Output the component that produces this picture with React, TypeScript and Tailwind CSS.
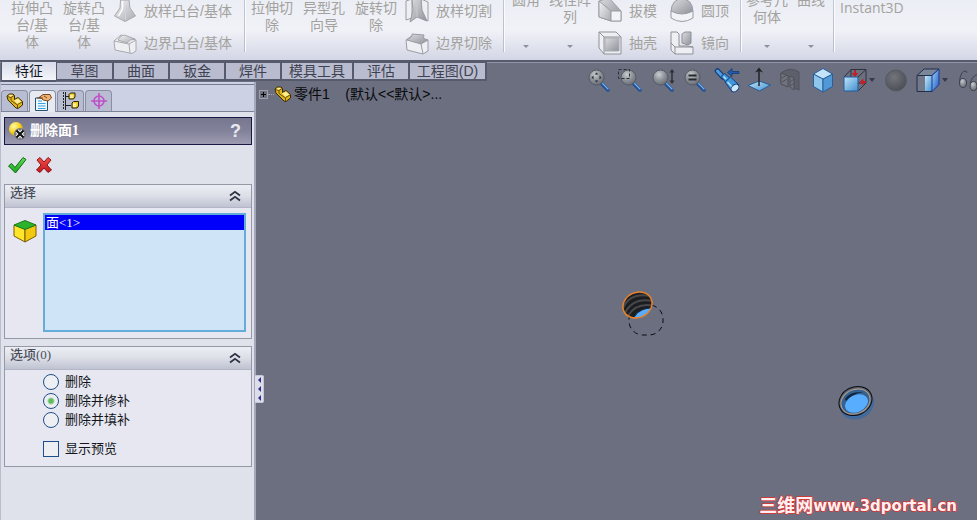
import { useState, type ReactNode } from "react";

/* ---------- ribbon drawings ---------- */

const ribbonSvg = "h-6 w-6 shrink-0";

function Defs() {
  return (
    <svg className="absolute h-0 w-0" aria-hidden="true">
      <defs>
        <linearGradient id="grey" x1="0" y1="0" x2="1" y2="1">
          <stop offset="0" stopColor="#f4f4f6" />
          <stop offset="1" stopColor="#a9abb2" />
        </linearGradient>
        <linearGradient id="greyDark" x1="0" y1="0" x2="1" y2="1">
          <stop offset="0" stopColor="#dcdde1" />
          <stop offset="1" stopColor="#8f9199" />
        </linearGradient>
        <radialGradient id="lens" cx="0.4" cy="0.3" r="0.75">
          <stop offset="0" stopColor="#c8cdd0" />
          <stop offset="0.5" stopColor="#8f949a" />
          <stop offset="1" stopColor="#666b74" />
        </radialGradient>
        <linearGradient id="blue" x1="0" y1="0" x2="1" y2="1">
          <stop offset="0" stopColor="#c3e5f8" />
          <stop offset="1" stopColor="#3f8fd0" />
        </linearGradient>
        <linearGradient id="deepBlue" x1="0" y1="0" x2="1" y2="1">
          <stop offset="0" stopColor="#9fd4f5" />
          <stop offset="1" stopColor="#1f55c4" />
        </linearGradient>
        <radialGradient id="ball" cx="0.4" cy="0.35" r="0.7">
          <stop offset="0" stopColor="#73757c" />
          <stop offset="1" stopColor="#4b4d55" />
        </radialGradient>
        <radialGradient id="sphere" cx="0.35" cy="0.3" r="0.8">
          <stop offset="0" stopColor="#fff9a8" />
          <stop offset="0.5" stopColor="#f6d62a" />
          <stop offset="1" stopColor="#b98c0a" />
        </radialGradient>
        <linearGradient id="green" x1="0" y1="0" x2="0" y2="1">
          <stop offset="0" stopColor="#5fe04f" />
          <stop offset="1" stopColor="#17a51a" />
        </linearGradient>
        <linearGradient id="red" x1="0" y1="0" x2="0" y2="1">
          <stop offset="0" stopColor="#f0504a" />
          <stop offset="1" stopColor="#c01820" />
        </linearGradient>
      </defs>
    </svg>
  );
}

function LoftIcon() {
  return (
    <svg className={ribbonSvg} viewBox="0 0 24 24" stroke="#a8aab0" fill="url(#grey)">
      <path d="M7.500 1 L7 9 L1.500 17 L12 22.500 L22.500 17 L17 9 L16 1 Z" />
      <path d="M9.500 2 L9.500 10 L5.500 17" fill="none" stroke="#fff" strokeWidth="1.500" />
      <path d="M12.500 10 L12.500 21" fill="none" stroke="#d2d3d8" />
    </svg>
  );
}
function BoundaryIcon() {
  return (
    <svg className={ribbonSvg} viewBox="0 0 24 24" stroke="#a8aab0" fill="#eeeff3">
      <path d="M1 10 L8 4 L23 9 L23 20 L19 22.500 L2 19 Z" />
      <path d="M1 10 L16 13 L23 9 M16 13 L17 22" fill="none" />
      <path d="M5 9 Q9 2 14 5 L22 8 Q17 8 14 12 Z" fill="url(#grey)" />
    </svg>
  );
}
function LoftCutIcon() {
  return (
    <svg className={ribbonSvg} viewBox="0 0 24 24" stroke="#9b9da5" fill="#eeeff3">
      <path d="M1 2 L7 0 L7 19 L1 21 Z M16 0 L23 3 L23 22 L17 20 Z" />
      <path d="M7 0 L16 0 L17 11 L22 22 L12 18 L5 23 L8 11 Z" fill="url(#greyDark)" />
      <path d="M12 0 L12 18" fill="none" stroke="#c9cad0" />
    </svg>
  );
}
function BoundaryCutIcon() {
  return (
    <svg className={ribbonSvg} viewBox="0 0 24 24" stroke="#9b9da5" fill="#eeeff3">
      <path d="M1 9 L8 4 L23 9 L23 20 L18 23 L2 19 Z" />
      <path d="M2 9 Q8 6 7 3 L19 4 Q17 9 23 9 L16 13 Z" fill="url(#greyDark)" />
      <path d="M16 13 L18 23" fill="none" />
    </svg>
  );
}
function DraftIcon() {
  return (
    <svg className={ribbonSvg} viewBox="0 0 24 24" stroke="#9b9da5" fill="url(#grey)">
      <path d="M1 2 L11 -1 L23 12 L23 22 L13 22 L1 18 Z" fill="url(#greyDark)" />
      <path d="M1 2 L13 12 L13 22 L1 18 Z" />
      <path d="M13 12 L23 12 L23 22 L13 22 Z" fill="#f2f3f6" />
    </svg>
  );
}
function ShellIcon() {
  return (
    <svg className={ribbonSvg} viewBox="0 0 24 24" stroke="#8f9199" fill="#eeeff3">
      <path d="M1 1 L18 1 L23 6 L23 23 L6 23 L1 17 Z" />
      <path d="M6 6 L23 6 M1 1 L6 6 L6 23" fill="none" />
      <path d="M7 7 L21 7 L21 20 L7 20 Z" fill="url(#greyDark)" stroke="#a9abb2" />
    </svg>
  );
}
function DomeIcon() {
  return (
    <svg className={ribbonSvg} viewBox="0 0 24 24" stroke="#9b9da5" fill="url(#grey)">
      <path d="M1 12 L1 19 Q12 26 23 19 L23 12 Z" fill="#f2f3f6" />
      <path d="M1 12 Q2 0 12 0 Q22 0 23 12 Q12 18 1 12 Z" fill="url(#greyDark)" />
    </svg>
  );
}
function MirrorIcon() {
  return (
    <svg className={ribbonSvg} viewBox="0 0 24 24" stroke="#8f9199" fill="#eeeff3">
      <path d="M1 1 L7 1 L9 3 L9 15 L17 15 L23 16 L23 23 L5 23 L1 19 Z" />
      <path d="M12 3 L15 1 L21 1 L21 12 L18 14 L12 12 Z" fill="url(#greyDark)" />
      <path d="M5 16 L23 16 M5 16 L5 23 M5 16 L1 12" fill="none" />
    </svg>
  );
}

/* ---------- ribbon ---------- */

function Caret() {
  return <span className="h-0 w-0 border-x-[3px] border-t-[3px] border-x-transparent border-t-[#8f919b]" />;
}

function BigButton({ lines, narrow }: { lines: string[]; narrow?: boolean }) {
  if (narrow) {
    return (
      <button disabled className="-mt-2 flex h-14 w-11 flex-col items-center justify-between whitespace-nowrap leading-[17px]">
        <span className="flex flex-col items-center">
          {lines.map((l) => (
            <span key={l}>{l}</span>
          ))}
        </span>
        <Caret />
      </button>
    );
  }
  return (
    <button disabled className="flex w-13 flex-col items-center self-start whitespace-nowrap leading-[17px]">
      {lines.map((l) => (
        <span key={l}>{l}</span>
      ))}
    </button>
  );
}

function SmallColumn({ items, className }: { items: [ReactNode, string][]; className: string }) {
  return (
    <div className={`-mt-px flex flex-col gap-2 ${className}`}>
      {items.map(([icon, label]) => (
        <button key={label} disabled className="flex h-6 items-center gap-[7px] whitespace-nowrap">
          {icon}
          {label}
        </button>
      ))}
    </div>
  );
}

function Separator() {
  return <div className="-mt-1 h-14 w-px shrink-0 bg-gradient-to-b from-[#c4c7d3] to-[#b9bccb] shadow-[1px_0_0_#fafbfd]" />;
}

function Ribbon() {
  return (
    <header className="flex h-[60px] shrink-0 overflow-hidden bg-gradient-to-b from-[#eceef5] via-[#f1f2f8] to-[#d3d6e5] text-sm text-[#a3a29e]">
      <div className="flex shrink-0 pl-1.5">
        <BigButton lines={["拉伸凸", "台/基", "体"]} />
        <BigButton lines={["旋转凸", "台/基", "体"]} />
        <SmallColumn className="w-[134px] pl-[3px]" items={[[<LoftIcon />, "放样凸台/基体"], [<BoundaryIcon />, "边界凸台/基体"]]} />
      </div>
      <Separator />
      <div className="flex shrink-0 pl-px">
        <BigButton lines={["拉伸切", "除"]} />
        <BigButton lines={["异型孔", "向导"]} />
        <BigButton lines={["旋转切", "除"]} />
        <SmallColumn className="w-[101px] pl-[3px]" items={[[<LoftCutIcon />, "放样切割"], [<BoundaryCutIcon />, "边界切除"]]} />
      </div>
      <Separator />
      <div className="flex shrink-0">
        <BigButton narrow lines={["圆角"]} />
        <BigButton narrow lines={["线性阵", "列"]} />
        <SmallColumn className="w-[78px] pl-1.5" items={[[<DraftIcon />, "拔模"], [<ShellIcon />, "抽壳"]]} />
        <SmallColumn className="w-[70px]" items={[[<DomeIcon />, "圆顶"], [<MirrorIcon />, "镜向"]]} />
      </div>
      <Separator />
      <div className="flex shrink-0 pl-1">
        <BigButton narrow lines={["参考几", "何体"]} />
        <BigButton narrow lines={["曲线"]} />
      </div>
      <Separator />
      <button disabled className="self-start px-1.5 font-['Open_Sans','Noto_Sans_CJK_SC',sans-serif] leading-4">
        Instant3D
      </button>
    </header>
  );
}

/* ---------- command tabs ---------- */

const commandTabs: [string, string][] = [
  ["草图", "w-[57px]"],
  ["曲面", "w-14"],
  ["钣金", "w-14"],
  ["焊件", "w-14"],
  ["模具工具", "w-[72px]"],
  ["评估", "w-14"],
  ["工程图(D)", "w-[77px]"],
];

function CommandTabs() {
  return (
    <nav className="flex h-5 pl-px text-sm leading-4 text-[#3e4250]">
      <button className="h-5 w-14 rounded-b-[2px] border-x border-b-2 border-[#555a6c] bg-gradient-to-b from-[#d9dcea] to-[#f4f5fa] text-[#15171f]">
        特征
      </button>
      {commandTabs.map(([label, width]) => (
        <button
          key={label}
          className={`h-[19px] whitespace-nowrap border-b-2 border-r-2 border-t border-[#555a6c] bg-[#b9bccf] ${width}`}
        >
          {label}
        </button>
      ))}
    </nav>
  );
}

/* ---------- property manager ---------- */

function PartIcon() {
  return (
    <svg className="h-4.5 w-4.5" viewBox="0 0 18 18" strokeLinejoin="round">
      <path
        d="M1 4 L3.500 2 L7 2 L8.500 3.500 L8.500 7.500 L12 5.500 L16.500 9.500 L16.500 13 L12 16.500 L10 16 L2 8 Z"
        fill="#e3b51c"
        stroke="#3a2d06"
      />
      <path d="M2 4.200 L4.500 2.800 L7 3 L5 5 Z" fill="#fff2a0" />
      <path d="M8 8.500 L12 6.500 L15.500 9.800 L11.500 12 Z" fill="#ffee90" />
      <path d="M1.500 4.500 L5 5.500 L5 8.500 L11.500 13 L11.500 16 M11.500 12.500 L16 10 M5 5.500 L8 3.500" fill="none" stroke="#5b4705" strokeWidth="0.900" />
    </svg>
  );
}
function PropertyIcon() {
  return (
    <svg className="h-4.5 w-4.5" viewBox="0 0 18 18">
      <path d="M1.500 5 H13.500 V17.500 H1.500 Z" fill="#eef8ff" stroke="#28506e" />
      <path d="M4 8 H8 M4 10.500 H11.500 M4 13 H11.500 M4 15.500 H11.500" stroke="#35a1e0" />
      <path d="M5 4.500 L9 1.500 H16 L17.500 5 L14 8 L9 7 L7 5 Z" fill="#f0b070" stroke="#6b3c14" strokeWidth="0.900" />
      <path d="M3 5 H9 M10 3 L13 5" stroke="#6b3c14" strokeWidth="0.900" />
    </svg>
  );
}
function ConfigIcon() {
  return (
    <svg className="h-4.5 w-4.5" viewBox="0 0 18 18">
      <path d="M1.500 0 V18" stroke="#222" strokeDasharray="2 1" />
      <path d="M3.500 0 V18 M3.500 4.500 H7 M3.500 13.500 H9" stroke="#222" />
      <path d="M7 2.500 L8.500 1 H13 V5 L11.500 7 H7 Z M10 11 L11.500 9.500 H16.500 V14 L15 16 H10 Z" fill="#f3d02e" stroke="#2b2205" />
      <path d="M8 3 H11 V6 H8 Z M11 11.500 H14 V15 H11 Z" fill="#fff3a0" />
    </svg>
  );
}
function TargetIcon() {
  return (
    <svg className="h-4.5 w-4.5" viewBox="0 0 18 18" fill="none" stroke="#c04fc8" strokeWidth="1.600">
      <circle cx="9" cy="9" r="5" />
      <path d="M9 1 V17 M1 9 H17" />
    </svg>
  );
}

const managerTabs: [string, ReactNode][] = [
  ["设计树", <PartIcon />],
  ["属性", <PropertyIcon />],
  ["配置", <ConfigIcon />],
  ["尺寸", <TargetIcon />],
];

function Chevrons() {
  return (
    <svg className="h-3 w-3" viewBox="0 0 12 12" fill="none" stroke="#2f3444" strokeWidth="1.800">
      <path d="M1 5.500 L6 1.800 L11 5.500 M1 10.500 L6 6.800 L11 10.500" />
    </svg>
  );
}

function Group({ title, children }: { title: string; children: ReactNode }) {
  const [open, setOpen] = useState(true);
  return (
    <section className="border border-[#9698a6] bg-[#e6e7f0]">
      <button
        onClick={() => setOpen(!open)}
        className="flex h-[23px] w-full items-start justify-between border-b border-[#b3b6c6] bg-gradient-to-b from-[#eceef4] via-[#dcdfe7] to-[#bfc3d2] pl-[5px] pr-2.5 text-[13px] font-medium leading-4 text-[#4a4e5b]"
      >
        {title}
        <span className="pt-[5px]">
          <Chevrons />
        </span>
      </button>
      {open && children}
    </section>
  );
}

const modes = ["删除", "删除并修补", "删除并填补"];

function PropertyPanel() {
  const [mode, setMode] = useState("删除并修补");
  return (
    <aside className="relative w-64 shrink-0 border-l border-r-2 border-l-[#b9bdce] border-r-[#a4a8ba] bg-[#dfe2eb] font-['Liberation_Serif','Noto_Sans_CJK_SC',serif]">
      <div className="flex h-[30px] items-end gap-px border-b border-[#7d8296] bg-[#cdd1e4] shadow-[inset_0_2px_0_#cdd1e4,inset_0_3px_0_#767b90]">
        {managerTabs.map(([label, icon], i) => (
          <button
            key={label}
            aria-label={label}
            className={
              i === 1
                ? "-mb-px flex h-[22px] w-[27px] items-center justify-center rounded-t border border-b-0 border-[#8a8ea3] bg-[#e8eaf2]"
                : "flex h-[21px] w-[27px] items-center justify-center rounded-t border border-b-0 border-[#8a8ea3] bg-[#b9bdd2]"
            }
          >
            {icon}
          </button>
        ))}
      </div>

      <div className="pl-[3px] pr-0.5 pt-[5px]">
        <div className="flex h-7 items-center gap-0.5 border border-[#1c1846] bg-gradient-to-b from-[#77778f] via-[#82829a] to-[#9c9bb2] pl-[3px] pr-2.5 text-white">
          <svg className="h-5 w-5" viewBox="0 0 20 20">
            <circle cx="8" cy="8" r="7" fill="url(#sphere)" />
            <circle cx="12" cy="13" r="6" fill="#777a80" />
            <path d="M9 10 L15 16 M15 10 L9 16" stroke="#fff" strokeWidth="4" />
            <path d="M8.500 9.500 L15.500 16.500 M15.500 9.500 L8.500 16.500" stroke="#111" strokeWidth="2.200" />
          </svg>
          <h1 className="flex-1 text-sm font-bold">删除面1</h1>
          <button className="font-['Liberation_Sans',sans-serif] text-lg font-bold leading-none text-[#e9e9f0]">?</button>
        </div>

        <div className="flex h-[39px] items-center gap-[7px] pl-[3px]">
          <button aria-label="确定">
            <svg className="h-5 w-5" viewBox="0 0 20 20">
              <path d="M1.500 11 L4.500 8.500 L8 12.500 L16 2.500 L19 4.500 L8.500 18 Z" fill="url(#green)" stroke="#12681a" strokeLinejoin="round" />
            </svg>
          </button>
          <button aria-label="取消">
            <svg className="h-5 w-5" viewBox="0 0 20 20">
              <path
                d="M3 5 L6 2.500 L10 7 L14 2.500 L17 5 L13 10 L17.500 15 L14 17.500 L10 13 L6 17.500 L2.500 15 L7 10 Z"
                fill="url(#red)"
                stroke="#8e1218"
                strokeLinejoin="round"
              />
            </svg>
          </button>
        </div>

        <div className="flex flex-col gap-[7px]">
          <Group title="选择">
            <div className="flex gap-1.5 pb-1.5 pl-2 pr-[5px] pt-[5px]">
              <svg className="mt-1.5 h-6 w-6 shrink-0" viewBox="0 0 24 24" stroke="#7a5a08" strokeLinejoin="round">
                <path d="M1 6 L12 10 V23 L1 17 Z" fill="#ffe62b" />
                <path d="M23 6 L12 10 V23 L23 17 Z" fill="#f3c811" />
                <path d="M1 6 L12 1.500 L23 6 L12 10.500 Z" fill="#2cb22c" stroke="#1b7a1b" />
              </svg>
              <ul role="listbox" aria-label="要删除的面" className="h-[119px] flex-1 border-2 border-[#64add8] bg-[#cfe4f7]">
                <li role="option" aria-selected="true" className="h-[15px] bg-[#0000fb] pl-px text-[13px] leading-[15px] text-white">
                  面&lt;1&gt;
                </li>
              </ul>
            </div>
          </Group>

          <Group title="选项(0)">
            <div className="flex flex-col pb-2 pl-[38px] pt-0.5 text-[13px] text-[#14161c]">
              {modes.map((m) => (
                <label key={m} className="flex h-[19px] items-center gap-1.5">
                  <input
                    type="radio"
                    name="mode"
                    checked={mode === m}
                    onChange={() => setMode(m)}
                    className="h-4 w-4 appearance-none rounded-full border border-[#1d4f8c] bg-[#eeeff3] checked:bg-[radial-gradient(circle,#5fba5a_0_2px,#eeeff3_4px)]"
                  />
                  {m}
                </label>
              ))}
              <label className="mt-2.5 flex h-[19px] items-center gap-1.5">
                <input type="checkbox" className="h-4 w-4 appearance-none border border-[#1d4f8c] bg-[#eeeff3] checked:bg-[#4db84a]" />
                显示预览
              </label>
            </div>
          </Group>
        </div>
      </div>

      <button
        aria-label="收起面板"
        className="absolute -right-2.5 top-[293px] flex h-7 w-[9px] flex-col items-center justify-around rounded-r-[2px] border border-l-0 border-[#c4c6d6] bg-[#dcdeea]"
      >
        {[0, 1, 2].map((n) => (
          <span key={n} className="h-0 w-0 border-y-[3px] border-r-[3px] border-y-transparent border-r-[#332f8e]" />
        ))}
      </button>
    </aside>
  );
}

/* ---------- graphics area ---------- */

function Magnifier({ children }: { children?: ReactNode }) {
  return (
    <>
      <path d="M17 18 L23 24" stroke="#1f4f94" strokeWidth="3.500" strokeLinecap="round" />
      <path d="M17.500 17.500 L23 23" stroke="#76aee6" strokeWidth="1.300" strokeLinecap="round" />
      <circle cx="11.500" cy="11.500" r="7.500" fill="url(#lens)" stroke="#555a64" />
      {children}
    </>
  );
}

const viewTools: { label: string; menu?: boolean; art: ReactNode }[] = [
  {
    label: "整屏显示",
    art: (
      <Magnifier>
        <path
          d="M11.500 6.500 L13.500 8.500 H9.500 Z M11.500 16.500 L13.500 14.500 H9.500 Z M6.500 11.500 L8.500 9.500 V13.500 Z M16.500 11.500 L14.500 9.500 V13.500 Z"
          fill="#2d3036"
        />
      </Magnifier>
    ),
  },
  {
    label: "局部放大",
    art: (
      <Magnifier>
        <path d="M1.500 3.500 H12.500 V12.500 H1.500 Z" fill="none" stroke="#2d3036" strokeDasharray="3 2" />
      </Magnifier>
    ),
  },
  {
    label: "动态放大",
    art: (
      <Magnifier>
        <path d="M23 5 V16" stroke="#2d3036" strokeWidth="1.500" />
        <path d="M23 3 L25.500 6.500 H20.500 Z M23 18 L25.500 14.500 H20.500 Z" fill="#2d3036" />
      </Magnifier>
    ),
  },
  {
    label: "缩放到选择",
    art: (
      <Magnifier>
        <path d="M7.500 9.500 H15.500 M7.500 13.500 H15.500" stroke="#25282e" strokeWidth="2" />
      </Magnifier>
    ),
  },
  {
    label: "上一视图",
    art: (
      <>
        <path d="M4.500 5 L10 11" stroke="#173f7d" strokeWidth="5.500" strokeLinecap="round" />
        <path d="M4.500 5 L10 11" stroke="#4f9fe0" strokeWidth="3" strokeLinecap="round" />
        <path d="M8 10.500 L11.500 7.500 L17 12 L13 16.500 Z" fill="#3f97dd" stroke="#173f7d" strokeLinejoin="round" />
        <path d="M12 16 L17.500 11 L25.500 18.500 L19 25.500 Z" fill="#3f97dd" stroke="#173f7d" strokeLinejoin="round" />
        <path d="M14.500 16 L19.500 21.500 M10.500 10.500 L13 13" stroke="#b6e0fb" strokeWidth="1.500" />
        <ellipse cx="22" cy="22" rx="4.500" ry="3.200" transform="rotate(-45 22 22)" fill="#cce8fa" stroke="#173f7d" />
        <path d="M14.500 6.500 L19 2.500 V5.500 H26 V7.500 H19 V10.500 Z" fill="#1d5cae" stroke="#12356d" strokeWidth="0.700" />
      </>
    ),
  },
  {
    label: "视图定向",
    art: (
      <>
        <path d="M3 19.500 L14 15 L25.500 19 L14.500 25 Z" fill="url(#blue)" stroke="#285b96" />
        <path d="M14 20 V4" stroke="#20232a" strokeWidth="1.500" />
        <path d="M14 1.500 L18 6.500 L14 5 L10 6.500 Z" fill="#20232a" />
      </>
    ),
  },
  {
    label: "剖面视图",
    art: (
      <g stroke="#50535c" fill="#5d606a">
        <path d="M4 7 Q13 0 22 6 V24 L17 22 V12 Q14 9 11 11 V21 L4 18 Z" />
        <path d="M4 7 L11 10 V21 L4 18 Z M13 10 L17 12 V24 L13 21 Z" fill="#70737c" />
        <path d="M5 12 L10 9 M5 16 L10 13 M13 16 L17 13 M13 20 L17 17" />
      </g>
    ),
  },
  {
    label: "等轴测",
    art: (
      <g stroke="#275f9f" strokeLinejoin="round">
        <path d="M4.500 8 L14 13 V26 L4.500 20.500 Z" fill="#8fc6ec" />
        <path d="M23.500 8 L14 13 V26 L23.500 20.500 Z" fill="#5199d6" />
        <path d="M4.500 8 L14 2.500 L23.500 8 L14 13 Z" fill="#c3e3f8" />
      </g>
    ),
  },
  {
    label: "显示样式",
    menu: true,
    art: (
      <>
        <path d="M3 11 L10 3.500 H25 L17 11 M25 3.500 V17 L17 25 M10 3.500 V11 M17 17 H25" stroke="#2e323d" />
        <path d="M3 11 H17 V25 H3 Z" fill="url(#blue)" stroke="#245c9c" />
        <path d="M13 4 H15 V7 H17.500 L14 11 L10.500 7 H13 Z M25 15 V17 H22.500 V19.500 L18.500 16 L22.500 12.500 V15 Z" fill="#c31f2b" />
      </>
    ),
  },
  { label: "外观", art: <circle cx="14" cy="14.500" r="10.500" fill="url(#ball)" stroke="#575a63" /> },
  {
    label: "应用布景",
    menu: true,
    art: (
      <g strokeLinejoin="round">
        <path d="M3 9.500 L10 3 H25 L18 9.500 Z" fill="#7a8699" stroke="#252e4a" />
        <path d="M3 9.500 H18 V25.500 H3 Z" fill="#72798a" stroke="#252e4a" />
        <path d="M11 10 H18 V25 H11 Z" fill="url(#blue)" />
        <path d="M18 9.500 L25 3 V18.500 L18 25.500 Z" fill="url(#deepBlue)" stroke="#173a94" />
      </g>
    ),
  },
  {
    label: "隐藏/显示",
    art: (
      <g fill="url(#lens)" stroke="#3b4250">
        <path d="M4.500 15 Q6 4 11 5 L12 7 M15 17 Q19 7 24 9" fill="none" />
        <ellipse cx="8" cy="17" rx="3.500" ry="4.500" />
        <ellipse cx="18.500" cy="20" rx="3.500" ry="4.500" />
      </g>
    ),
  },
];

function ViewToolbar() {
  return (
    <div className="absolute -right-2 top-1 flex h-7 items-center">
      {viewTools.map(({ label, menu, art }) => (
        <div key={label} className="flex items-center">
          <button aria-label={label} className="flex w-8 justify-center">
            <svg className="h-7 w-7" viewBox="0 0 28 28" fill="none">
              {art}
            </svg>
          </button>
          {menu && <span className="-ml-0.5 mr-[5px] h-0 w-0 border-x-[3px] border-t-4 border-x-transparent border-t-[#343a4f]" />}
        </div>
      ))}
    </div>
  );
}

function ModelFeatures() {
  return (
    <>
      <svg className="absolute left-[364px] top-[206px] h-[50px] w-[48px]" viewBox="0 0 48 50">
        <defs>
          <clipPath id="bore">
            <ellipse cx="17.500" cy="17" rx="15" ry="12.500" transform="rotate(-25 17.500 17)" />
          </clipPath>
        </defs>
        <rect x="9" y="17" width="34" height="30" rx="14" fill="none" stroke="#0b0c10" strokeDasharray="5 4" />
        <g clipPath="url(#bore)">
          <rect width="40" height="40" fill="#1c1d20" />
          <g fill="none" stroke="#47484c" strokeWidth="2">
            <path d="M3 20 Q10 4 31 8 M5 25 Q13 9 33 13 M8 28 Q16 14 35 18" />
          </g>
          <ellipse cx="26" cy="30" rx="14" ry="9" transform="rotate(-25 26 30)" fill="#59adfb" stroke="#12233c" />
        </g>
        <ellipse cx="17.500" cy="17" rx="15" ry="12.500" transform="rotate(-25 17.500 17)" fill="none" stroke="#e8822a" strokeWidth="1.500" />
      </svg>
      <svg className="absolute left-[580px] top-[300px] h-[42px] w-[42px]" viewBox="0 0 42 42">
        <ellipse cx="21" cy="22.500" rx="17.500" ry="14.500" transform="rotate(-25 21 22.500)" fill="#426a9c" />
        <ellipse cx="19.500" cy="19" rx="17" ry="14" transform="rotate(-25 19.500 19)" fill="#5d6575" stroke="#0b0c10" />
        <ellipse cx="19.500" cy="19.500" rx="15" ry="12" transform="rotate(-25 19.500 19.500)" fill="#34618f" stroke="#b7a08b" />
        <path d="M9 17 Q14 9 27 10 Q16 12 10 19 Z" fill="#12233c" />
        <ellipse cx="20.500" cy="21.500" rx="12" ry="8.500" transform="rotate(-25 20.500 21.500)" fill="#58adff" />
      </svg>
    </>
  );
}

function GraphicsArea() {
  return (
    <main className="relative flex-1">
      <div className="flex h-6 items-center pl-[3px] text-sm text-[#08090c]">
        <button aria-label="展开" className="flex h-[9px] w-[9px] items-center justify-center border border-[#9ea1ac] bg-[#6d707f]">
          <svg className="h-[5px] w-[5px]" viewBox="0 0 5 5" stroke="#000">
            <path d="M2.500 0 V5 M0 2.500 H5" />
          </svg>
        </button>
        <span className="w-1.5 border-t border-dotted border-[#a5a8b3]" />
        <PartIcon />
        <span className="whitespace-pre pl-0.5">零件1    (默认&lt;&lt;默认&gt;...</span>
      </div>
      <ModelFeatures />
      <p className="absolute bottom-1 right-5 flex items-center whitespace-nowrap font-['DejaVu_Sans','Noto_Sans_CJK_SC',sans-serif] text-[15px] font-bold leading-5 text-[#fff1f1] [text-shadow:1px_0_0_#d13a3a,-1px_0_0_#d13a3a,0_1px_0_#d13a3a,0_-1px_0_#d13a3a]">
        <span className="text-lg leading-5">三维网</span>
        www.3dportal.cn
      </p>
    </main>
  );
}

export default function App() {
  return (
    <div className="flex min-h-screen flex-col overflow-hidden bg-[#6b6f7f] font-['Liberation_Sans','Noto_Sans_CJK_SC',sans-serif]">
      <Defs />
      <Ribbon />
      <div className="relative flex flex-1 flex-col border-t-2 border-[#555a6c] shadow-[inset_0_1px_0_#8f93a2]">
        <CommandTabs />
        <div className="flex flex-1">
          <PropertyPanel />
          <GraphicsArea />
        </div>
        <ViewToolbar />
      </div>
    </div>
  );
}
